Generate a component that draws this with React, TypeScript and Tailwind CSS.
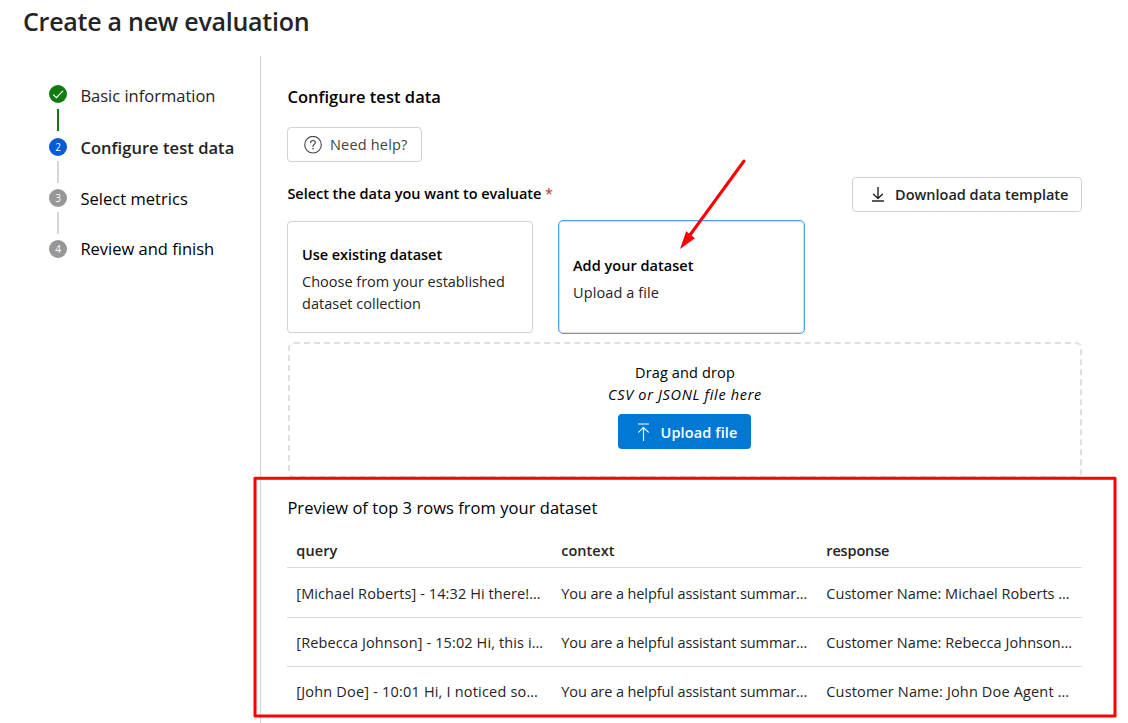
type Step = { label: string; state: 'done' | 'current' | 'todo'; height: string; text: string };

const steps: Step[] = [
  { label: 'Basic information', state: 'done', height: 'h-[52.5px]', text: 'leading-[21px] text-[#242424]' },
  { label: 'Configure test data', state: 'current', height: 'h-[51px]', text: 'leading-5 font-semibold tracking-[0.05px] text-[#242424]' },
  { label: 'Select metrics', state: 'todo', height: 'h-[51px]', text: 'leading-5 tracking-[0.04px] text-black' },
  { label: 'Review and finish', state: 'todo', height: 'h-[18px]', text: 'leading-[18px] text-black' },
];

const columns = [
  { name: 'query', cls: 'tracking-[0.08px]' },
  { name: 'context', cls: '' },
  { name: 'response', cls: 'tracking-[-0.15px]' },
];

const rows = [
  [
    { text: '[Michael Roberts] - 14:32 Hi there!…', cls: 'tracking-[0.1px]' },
    { text: 'You are a helpful assistant summar…', cls: 'tracking-[-0.1px]' },
    { text: 'Customer Name: Michael Roberts …', cls: 'tracking-[0.04px]' },
  ],
  [
    { text: '[Rebecca Johnson] - 15:02 Hi, this i…', cls: 'tracking-[0.12px]' },
    { text: 'You are a helpful assistant summar…', cls: 'tracking-[-0.1px]' },
    { text: 'Customer Name: Rebecca Johnson…', cls: 'tracking-[0.05px]' },
  ],
  [
    { text: '[John Doe] - 10:01 Hi, I noticed so…', cls: 'tracking-[0.19px]' },
    { text: 'You are a helpful assistant summar…', cls: 'tracking-[-0.1px]' },
    { text: 'Customer Name: John Doe Agent …', cls: 'tracking-[0.16px]' },
  ],
];

function StepMarker({ step, index }: { step: Step; index: number }) {
  if (step.state === 'done') {
    return (
      <svg className="size-[18px] shrink-0" viewBox="0 0 18 18" fill="none">
        <circle cx="9" cy="9" r="9" fill="#107c10" />
        <path d="M4.2 9.6 7.4 12.6 14 5.9" stroke="#fff" strokeWidth="1.3" />
      </svg>
    );
  }
  return (
    <span
      className={`flex size-[18px] shrink-0 items-center justify-center rounded-full text-[10px] leading-none text-white ${
        step.state === 'current' ? 'bg-[#015cda]' : 'bg-[#979797]'
      }`}
    >
      {index + 1}
    </span>
  );
}

function Stepper() {
  return (
    <nav className="w-[260px] shrink-0 pt-[29px] pl-[49px]">
      {steps.map((step, i) => (
        <div key={step.label} className={`flex ${step.height}`}>
          <div className="flex w-[18px] flex-col items-center">
            <StepMarker step={step} index={i} />
            {i < steps.length - 1 && (
              <span
                className={`h-[22px] w-0.5 ${
                  step.state === 'done' ? 'mt-1.5 bg-[#107c10]' : 'mt-[5.4px] bg-[#d6d6d6]'
                }`}
              />
            )}
          </div>
          <span className={`pl-[13.4px] text-[16.5px] whitespace-nowrap ${step.text}`}>{step.label}</span>
        </div>
      ))}
    </nav>
  );
}

function HelpIcon() {
  return (
    <svg className="size-[18px] shrink-0" viewBox="0 0 18 18" fill="none" stroke="#424242">
      <circle cx="9" cy="8.7" r="8.3" strokeWidth="1.1" />
      <path d="M6.7 6.8c0-1.4 1-2.3 2.3-2.3s2.3.9 2.3 2.1c0 1-.6 1.5-1.3 2.1-.7.6-1 1-1 1.8" strokeWidth="1.1" strokeLinecap="round" />
      <circle cx="9" cy="12.6" r=".8" fill="#424242" stroke="none" />
    </svg>
  );
}

function DownloadIcon() {
  return (
    <svg className="h-[15px] w-3 shrink-0" viewBox="0 0 12 15" fill="none" stroke="#242424" strokeWidth="1.4">
      <path d="M6 .3v11M1.6 7.2 6 11.5l4.4-4.3M.3 14h11.4" strokeLinecap="round" strokeLinejoin="round" />
    </svg>
  );
}

function UploadIcon() {
  return (
    <svg className="h-[18px] w-[11px] shrink-0" viewBox="0 0 11 18" fill="none" stroke="#fff" strokeWidth="1.15">
      <path d="M.4 1h10.2M5.5 17.6V4.6M.7 9.2l4.8-4.8 4.8 4.8" strokeLinecap="round" strokeLinejoin="round" />
    </svg>
  );
}

function Annotations() {
  return (
    <svg className="pointer-events-none absolute inset-0 h-[723px] w-[1128px]" viewBox="0 0 1128 723" fill="none">
      <path d="M744 161 690 235" stroke="#f00" strokeWidth="3" strokeLinecap="round" />
      <path d="M680 249 686.2 231.2 695 238.2Z" fill="#f00" />
      <rect x="255" y="478.2" width="860" height="237.8" stroke="#f00" strokeWidth="3" strokeLinejoin="round" />
    </svg>
  );
}

export default function App() {
  return (
    <div className="relative flex h-[723px] w-[1128px] flex-col overflow-hidden bg-white font-['Open_Sans',sans-serif] text-[14.5px] text-[#242424]">
      <header className="h-14 shrink-0 pt-1 pl-[23px]">
        <h1 className="text-[25px] leading-[35px] font-semibold tracking-[-0.25px]">Create a new evaluation</h1>
      </header>

      <div className="flex min-h-0 flex-1">
        <Stepper />

        <main className="flex flex-1 flex-col border-l border-[#d1d1d1] pt-[30px] pr-[46px] pl-[26px]">
          <h2 className="h-[41px] pl-[0.4px] text-[16.5px] leading-[22px] font-semibold tracking-[0.03px] text-black">Configure test data</h2>

          <button className="flex h-[35px] w-[135px] shrink-0 items-center gap-2 rounded border border-[#d1d1d1] pl-4 tracking-[0.18px] whitespace-nowrap text-[#424242]">
            <HelpIcon />
            Need help?
          </button>

          <div className="mt-[15px] flex h-[35px] shrink-0 items-center justify-between">
            <span className="pb-0.5 pl-[0.4px] font-semibold tracking-[-0.03px] text-black">
              Select the data you want to evaluate <span className="font-normal text-[#bc2f32]">*</span>
            </span>
            <button className="flex h-[35px] w-[230px] items-center gap-[11px] rounded border border-[#d1d1d1] pl-[19px] font-semibold whitespace-nowrap">
              <DownloadIcon />
              Download data template
            </button>
          </div>

          <div className="mt-2 flex shrink-0 items-center gap-[25px]">
            <section className="flex h-28 w-[246px] flex-col justify-center rounded border border-[#d1d1d1] pl-3.5 leading-[22px]">
              <h3 className="mt-1 mb-[5px] font-semibold tracking-[-0.04px] text-black">Use existing dataset</h3>
              <p>Choose from your established</p>
              <p className="tracking-[0.02px]">dataset collection</p>
            </section>
            <section className="flex h-[114px] w-[247px] flex-col justify-center rounded-[5px] border border-[#479ef5] pl-3.5 leading-[22px] shadow-[inset_0_0_0_1px_#e0e0e0]">
              <h3 className="mt-1 mb-[5px] font-semibold tracking-[0.03px] text-black">Add your dataset</h3>
              <p className="tracking-[0.1px]">Upload a file</p>
            </section>
          </div>

          <section className="mt-2 ml-px flex h-[136px] w-[794px] shrink-0 flex-col items-center rounded-md border-2 border-dashed border-[#e0e0e0] pt-[18px] leading-[22px] text-black">
            <p className="tracking-[0.14px]">Drag and drop</p>
            <p className="tracking-[0.67px] italic">CSV or JSONL file here</p>
            <button className="mt-2 mr-0.5 flex h-[35px] w-[133px] items-center gap-3 rounded bg-[#0078d4] pl-5 font-semibold tracking-[0.13px] whitespace-nowrap text-white">
              <UploadIcon />
              <span className="pt-0.5">Upload file</span>
            </button>
          </section>

          <h3 className="mt-[19px] h-[37px] shrink-0 pl-[0.4px] text-[16.5px] leading-[22px] tracking-[0.04px] text-black">
            Preview of top 3 rows from your dataset
          </h3>

          <div className="flex w-[795px] shrink-0 flex-col">
            <div className="grid h-[34px] grid-cols-3 items-center border-b border-[#d9d9d9] pt-px font-semibold">
              {columns.map((c) => (
                <span key={c.name} className={`pl-[9.3px] ${c.cls}`}>{c.name}</span>
              ))}
            </div>
            {rows.map((row, i) => (
              <div
                key={i}
                className={`grid grid-cols-3 items-center whitespace-nowrap ${
                  i === 0 ? 'h-[50px] border-b border-[#d9d9d9] pt-0.5' : i === 1 ? 'h-[49px] border-b border-[#d9d9d9] pt-0.5' : 'h-[49px]'
                }`}
              >
                {row.map((cell, j) => (
                  <span key={j} className={`pl-[9.3px] ${cell.cls}`}>{cell.text}</span>
                ))}
              </div>
            ))}
          </div>
        </main>
      </div>
      <Annotations />
    </div>
  );
}
